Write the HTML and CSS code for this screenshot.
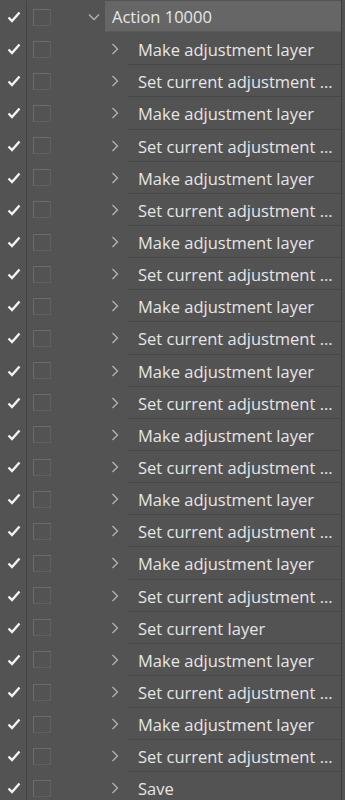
FILE: index.html
```html
<!DOCTYPE html>
<html>
<head>
<meta charset="utf-8">
<link rel="stylesheet" href="styles.css">
</head>
<body>
<div class="panel">
  <div class="list" id="list">
    <div class="row action">
      <div class="check"><svg width="14" height="12" viewBox="0 0 14 12"><path d="M1.5 6.5 L5 10 L12.5 1.5" fill="none" stroke="#f2f2f2" stroke-width="2.4"/></svg></div>
      <div class="toggle"><span class="box"></span></div>
      <div class="chev down"><svg width="12" height="8" viewBox="0 0 12 8"><path d="M1 1.5 L6 6.5 L11 1.5" fill="none" stroke="#b4b4b4" stroke-width="1.3"/></svg></div>
      <div class="label">Action 10000</div>
    </div>
  </div>
</div>
<script src="app.js"></script>
</body>
</html>
```

FILE: app.js
```js
var M = "Make adjustment layer";
var S = "Set current adjustment ...";
var items = [
  M, S, M, S, M, S, M, S, M, S, M, S, M, S, M, S, M, S,
  "Set current layer",
  M, S, M, S,
  "Save"
];
var list = document.getElementById('list');
items.forEach(function (t) {
  var r = document.createElement('div');
  r.className = 'row step';
  r.innerHTML =
    '<div class="check"><svg width="14" height="12" viewBox="0 0 14 12"><path d="M1.5 6.5 L5 10 L12.5 1.5" fill="none" stroke="#f2f2f2" stroke-width="2.4"/></svg></div>' +
    '<div class="toggle"><span class="box"></span></div>' +
    '<div class="chev right"><svg width="8" height="12" viewBox="0 0 8 12"><path d="M1.5 1 L6.5 6 L1.5 11" fill="none" stroke="#b4b4b4" stroke-width="1.3"/></svg></div>' +
    '<div class="label"></div>';
  r.querySelector('.label').textContent = t;
  list.appendChild(r);
});
```

FILE: styles.css
```css
html, body {
  margin: 0;
  padding: 0;
  background: #535353;
}
.panel {
  width: 345px;
  height: 800px;
  overflow: hidden;
  display: flex;
  font-family: "Open Sans", "DejaVu Sans", sans-serif;
  font-size: 16.5px;
  color: #e6e6e6;
}
.list {
  width: 341px;
  border-right: 1px solid #3c3c3c;
  padding-top: 1px;
}
.row {
  height: 32.15px;
  display: flex;
  align-items: stretch;
}
.check {
  width: 27px;
  border-right: 1px solid #444;
  display: flex;
  align-items: center;
  justify-content: center;
  padding-left: 1px;
  box-sizing: border-box;
}
.toggle {
  width: 32px;
  display: flex;
  align-items: center;
  padding-left: 6px;
  box-sizing: border-box;
}
.box {
  width: 18px;
  height: 17px;
  border: 1px solid #6b6b6b;
  border-right-color: #606060;
  border-bottom-color: #606060;
  box-sizing: border-box;
}
.chev {
  display: flex;
  align-items: center;
}
.chev.down {
  width: 46px;
  padding-left: 29px;
  box-sizing: border-box;
}
.chev.right {
  width: 69px;
  padding-left: 52px;
  box-sizing: border-box;
}
.label {
  flex: 1;
  min-width: 0;
  white-space: nowrap;
  overflow: hidden;
  padding-right: 2px;
  box-sizing: border-box;
}
.action .label {
  line-height: 30px;
  padding-top: 1px;
  background: #666;
  padding-left: 7px;
  margin-bottom: 1px;
  border-bottom: 1px solid #5a5a5a;
}
.step .label {
  line-height: 31px;
  padding-top: 1px;
  padding-left: 10px;
  border-bottom: 1px solid #474747;
}
```
